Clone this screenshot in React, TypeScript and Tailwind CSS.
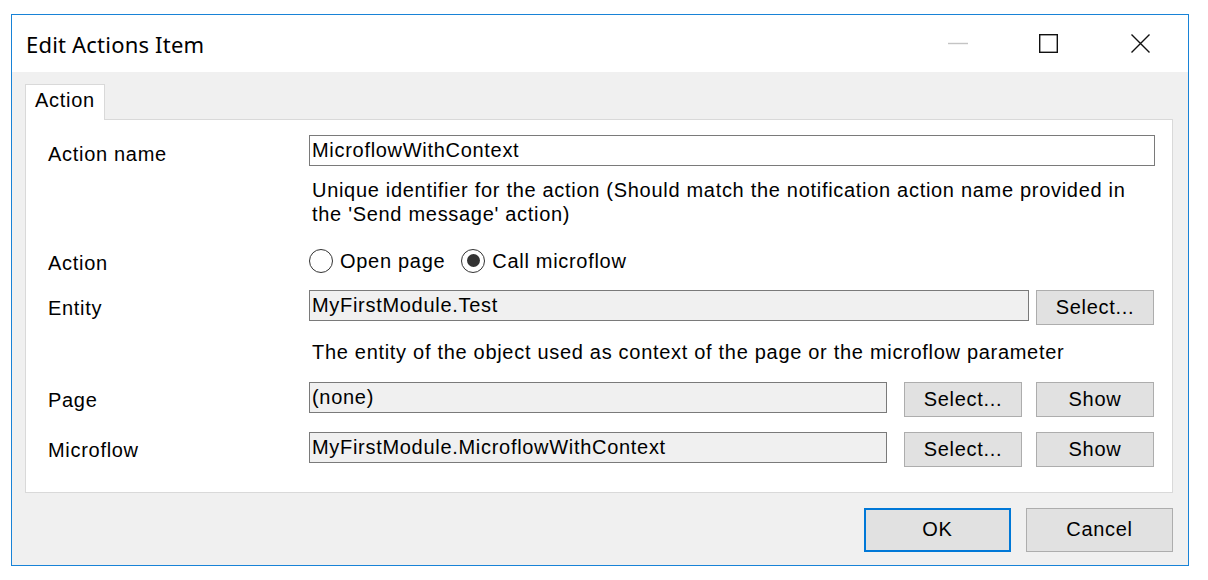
import React from "react";

const font = "font-['Liberation_Sans',Arial,sans-serif] text-[20px] leading-[24px] tracking-[0.7px] text-black";

type FieldProps = { value: string; width: string; disabled?: boolean };

const Field: React.FC<FieldProps> = ({ value, width, disabled }) => (
  <div
    className={`${width} h-[31px] border border-[#7a7a7a] pl-[2px] pt-[2px] whitespace-nowrap overflow-hidden ${
      disabled ? "bg-[#f0f0f0]" : "bg-white"
    }`}
  >
    {value}
  </div>
);

const Btn: React.FC<{ label: string; className?: string }> = ({ label, className = "" }) => (
  <div
    className={`w-[118px] h-[35px] shrink-0 flex items-center justify-center pb-[2px] border border-[#adadad] bg-[#e1e1e1] ${className}`}
  >
    {label}
  </div>
);

const Radio: React.FC<{ checked?: boolean; label: string }> = ({ checked, label }) => (
  <div className="flex items-center">
    <div className="w-[24px] h-[24px] rounded-full border border-[#333] bg-white flex items-center justify-center">
      {checked && <div className="w-[13px] h-[13px] rounded-full bg-[#333]" />}
    </div>
    <span className="ml-[7px]">{label}</span>
  </div>
);

export default function App() {
  return (
    <div className="min-h-screen bg-white pl-[11px] pt-[14px]">
      <div className="w-[1178px] h-[552px] border border-[#1883d7] bg-[#f0f0f0] flex flex-col">
        {/* Title bar */}
        <div className="h-[57px] bg-white flex items-center shrink-0">
          <span className="pl-[14px] pt-[2px] font-['Noto_Sans',sans-serif] text-[22px] tracking-[0.2px] text-black">
            Edit Actions Item
          </span>
          <div className="ml-auto flex items-center pr-[38px]">
            <svg width="20" height="19" viewBox="0 0 20 19">
              <line x1="0" y1="9.5" x2="20" y2="9.5" stroke="#c4c4c4" strokeWidth="1.4" />
            </svg>
            <svg width="19" height="19" viewBox="0 0 19 19" className="ml-[71px]">
              <rect x="0.7" y="0.7" width="17.6" height="17.6" fill="none" stroke="#111" strokeWidth="1.4" />
            </svg>
            <svg width="19" height="19" viewBox="0 0 19 19" className="ml-[73px]">
              <path d="M0.5 0.5 L18.5 18.5 M18.5 0.5 L0.5 18.5" stroke="#111" strokeWidth="1.4" />
            </svg>
          </div>
        </div>

        {/* Body */}
        <div className={`flex-1 pl-[13px] pr-[14px] pt-[12px] ${font}`}>
          {/* Tab */}
          <div className="w-[80px] h-[36px] bg-white border border-b-0 border-[#d9d9d9] pl-[9px] pt-[3px] relative z-10 -mb-px">
            Action
          </div>

          {/* Tab panel */}
          <div className="w-[1148px] h-[374px] bg-white border border-[#d9d9d9] pl-[22px] pr-[17px] pt-[15px]">
            {/* Action name */}
            <div className="flex items-start h-[35px]">
              <div className="w-[261px] pt-[7px]">Action name</div>
              <Field value="MicroflowWithContext" width="w-[846px]" />
            </div>
            <div className="ml-[264px] mt-[8px] w-[840px]">
              Unique identifier for the action (Should match the notification action name provided in the 'Send message' action)
            </div>

            {/* Action radios */}
            <div className="flex items-center h-[35px] mt-[17px]">
              <div className="w-[261px] pt-[4px]">Action</div>
              <Radio label="Open page" />
              <div className="ml-[16px]">
                <Radio checked label="Call microflow" />
              </div>
            </div>

            {/* Entity */}
            <div className="flex items-start h-[35px] mt-[12px]">
              <div className="w-[261px] pt-[6px]">Entity</div>
              <Field value="MyFirstModule.Test" width="w-[720px]" disabled />
              <Btn label="Select..." className="ml-[7px]" />
            </div>
            <div className="ml-[264px] mt-[15px]">
              The entity of the object used as context of the page or the microflow parameter
            </div>

            {/* Page */}
            <div className="flex items-start h-[35px] mt-[18px]">
              <div className="w-[261px] pt-[6px]">Page</div>
              <Field value="(none)" width="w-[578px]" disabled />
              <Btn label="Select..." className="ml-[17px]" />
              <Btn label="Show" className="ml-[14px]" />
            </div>

            {/* Microflow */}
            <div className="flex items-start h-[35px] mt-[15px]">
              <div className="w-[261px] pt-[6px]">Microflow</div>
              <Field value="MyFirstModule.MicroflowWithContext" width="w-[578px]" disabled />
              <Btn label="Select..." className="ml-[17px]" />
              <Btn label="Show" className="ml-[14px]" />
            </div>
          </div>

          {/* Dialog buttons */}
          <div className="w-[1148px] flex justify-end gap-[15px] mt-[15px]">
            <div className="w-[147px] h-[44px] flex items-center justify-center pb-[3px] border-2 border-[#0078d7] bg-[#e1e1e1]">
              OK
            </div>
            <div className="w-[147px] h-[44px] flex items-center justify-center pb-[3px] border border-[#adadad] bg-[#e1e1e1]">
              Cancel
            </div>
          </div>
        </div>
      </div>
    </div>
  );
}
